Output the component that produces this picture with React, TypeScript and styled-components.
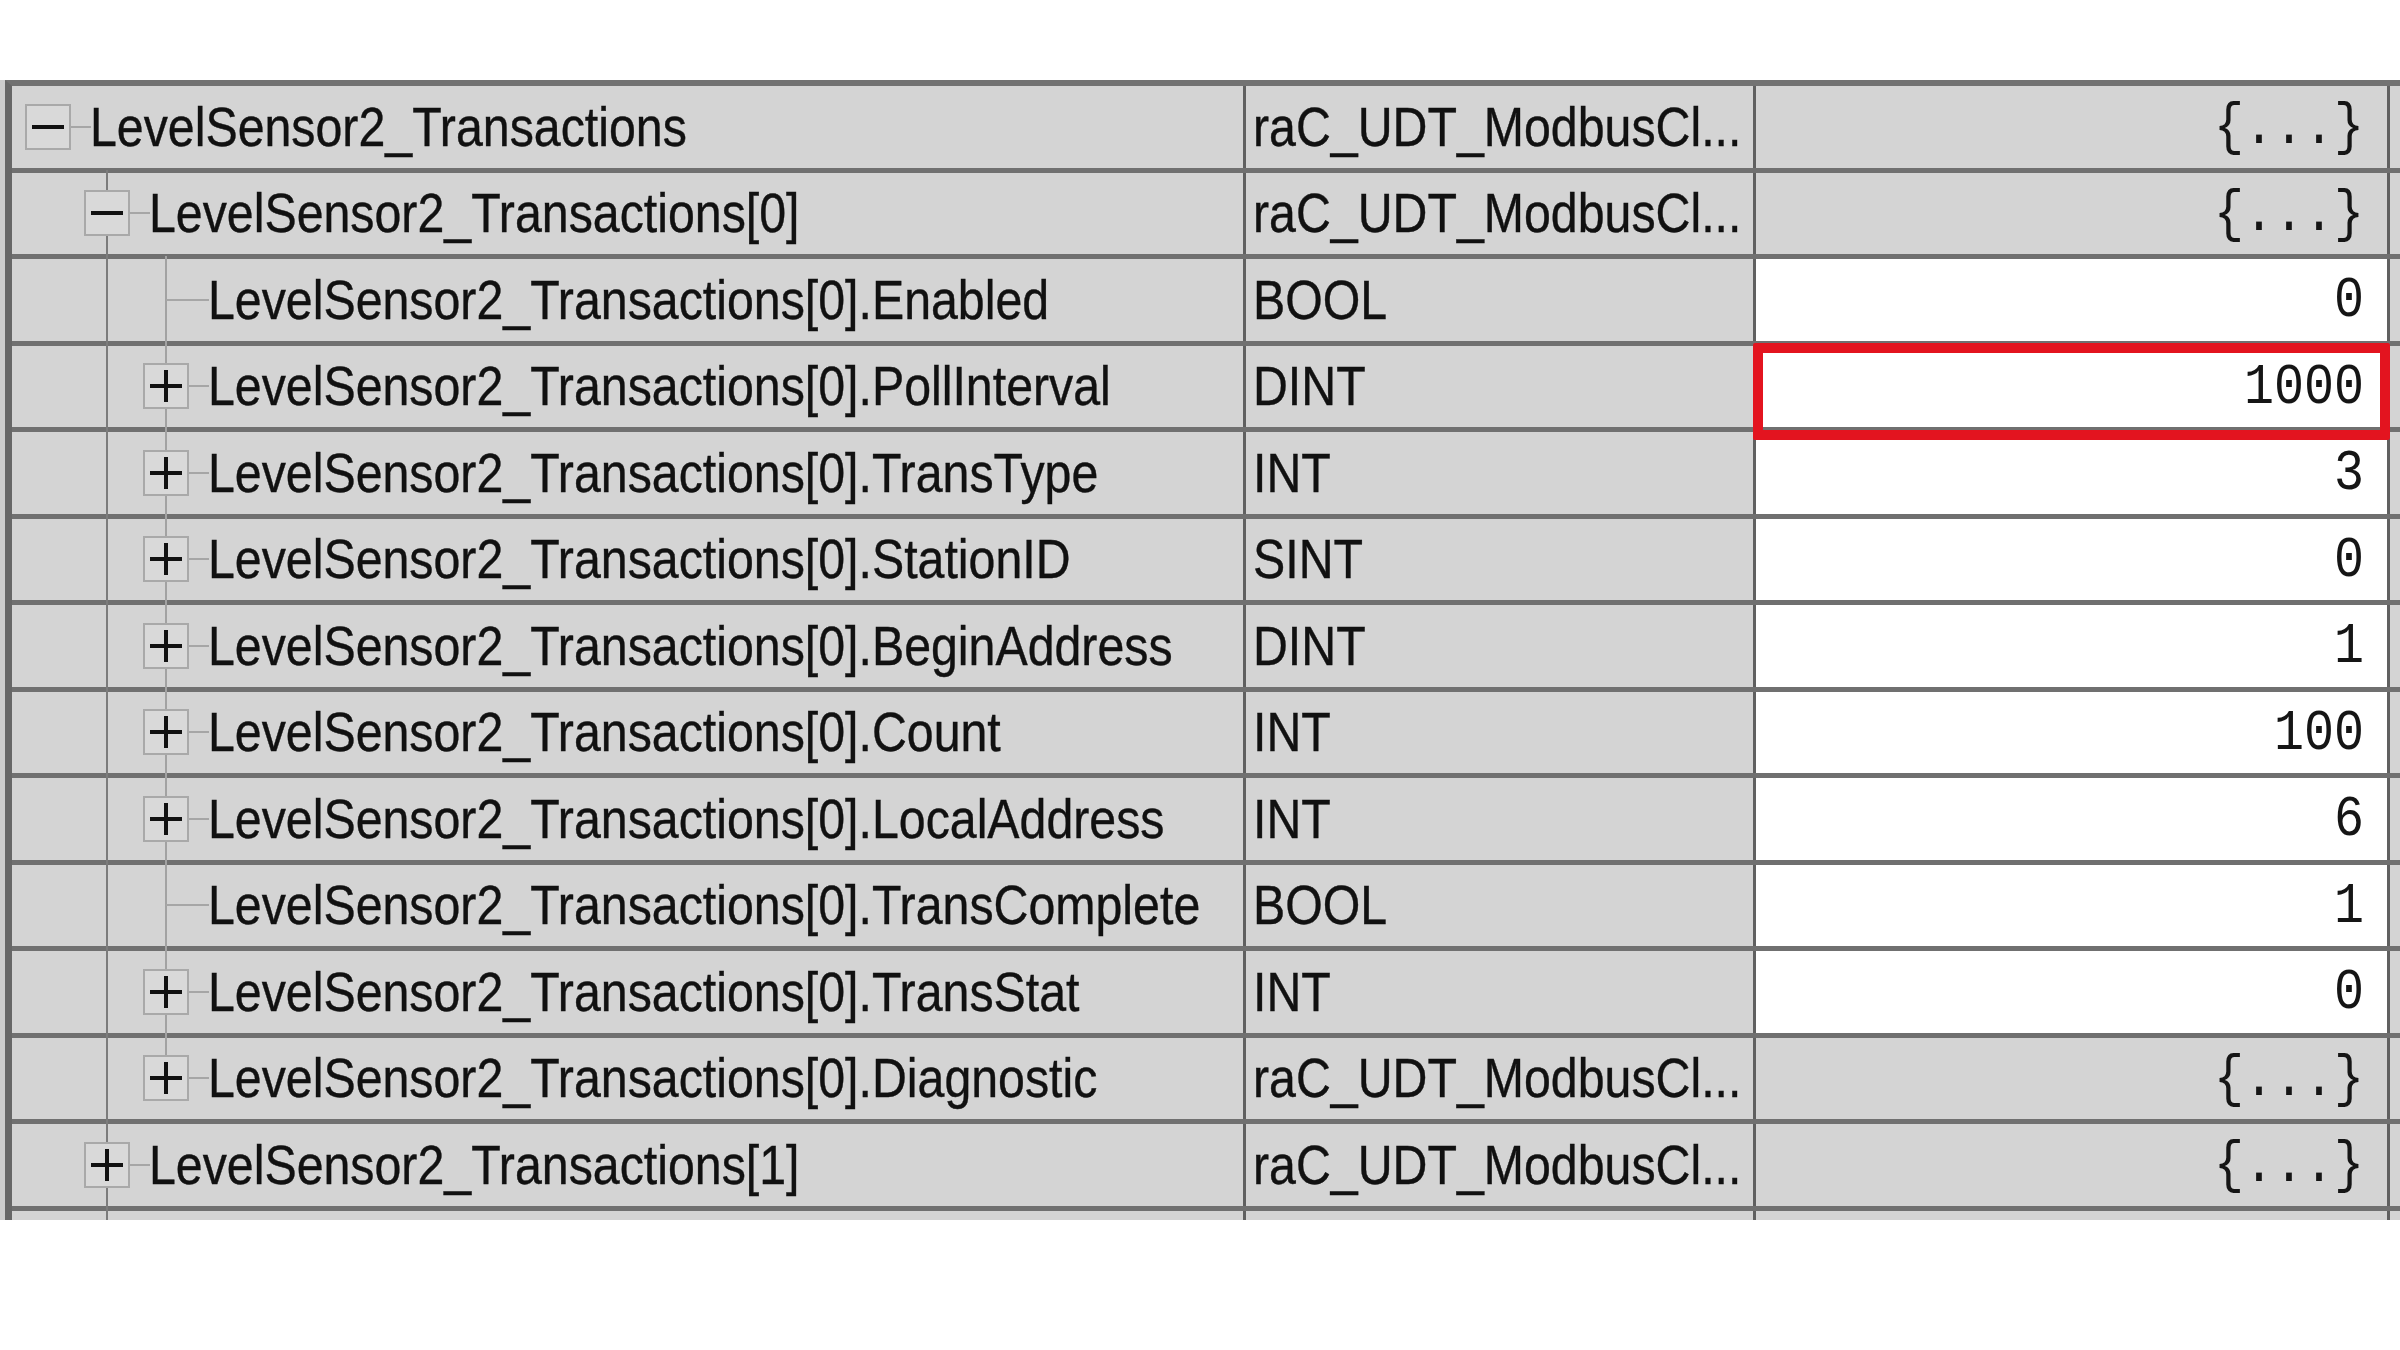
import React from "react";
import styled, { createGlobalStyle } from "styled-components";

const GlobalStyle = createGlobalStyle`
  html, body {
    margin: 0;
    padding: 0;
    background: #ffffff;
  }
  body {
    width: 2400px;
    height: 1350px;
    overflow: hidden;
  }
`;

type SlotSpec =
  | { kind: "empty" }
  | { kind: "pipe" }
  | { kind: "node"; up: boolean; down: boolean; box?: "+" | "-" };

interface TagRow {
  name: string;
  type: string;
  value: string;
  editable: boolean;
  highlight?: boolean;
  slots: SlotSpec[];
}

const E: SlotSpec = { kind: "empty" };
const P: SlotSpec = { kind: "pipe" };
const child = (box?: "+" | "-", down = true): SlotSpec => ({
  kind: "node",
  up: true,
  down,
  box,
});

const base = "LevelSensor2_Transactions";
const udt = "raC_UDT_ModbusCl...";

const rows: TagRow[] = [
  { name: base, type: udt, value: "{...}", editable: false, slots: [{ kind: "node", up: false, down: false, box: "-" }] },
  { name: `${base}[0]`, type: udt, value: "{...}", editable: false, slots: [E, child("-")] },
  { name: `${base}[0].Enabled`, type: "BOOL", value: "0", editable: true, slots: [E, P, child()] },
  { name: `${base}[0].PollInterval`, type: "DINT", value: "1000", editable: true, highlight: true, slots: [E, P, child("+")] },
  { name: `${base}[0].TransType`, type: "INT", value: "3", editable: true, slots: [E, P, child("+")] },
  { name: `${base}[0].StationID`, type: "SINT", value: "0", editable: true, slots: [E, P, child("+")] },
  { name: `${base}[0].BeginAddress`, type: "DINT", value: "1", editable: true, slots: [E, P, child("+")] },
  { name: `${base}[0].Count`, type: "INT", value: "100", editable: true, slots: [E, P, child("+")] },
  { name: `${base}[0].LocalAddress`, type: "INT", value: "6", editable: true, slots: [E, P, child("+")] },
  { name: `${base}[0].TransComplete`, type: "BOOL", value: "1", editable: true, slots: [E, P, child()] },
  { name: `${base}[0].TransStat`, type: "INT", value: "0", editable: true, slots: [E, P, child("+")] },
  { name: `${base}[0].Diagnostic`, type: udt, value: "{...}", editable: false, slots: [E, P, child("+", false)] },
  { name: `${base}[1]`, type: udt, value: "{...}", editable: false, slots: [E, child("+")] },
  { name: "", type: "", value: "", editable: false, slots: [E, P] },
];

const lineTones = ["#8a8a8a", "#7c7c7c", "#a2a2a2"];

const Page = styled.div`
  padding-top: 80px;
  width: 2400px;
`;

const Table = styled.div`
  height: 1140px;
  overflow: hidden;
  background: #cdcdcd;
  padding-left: 5px;
  box-sizing: border-box;
`;

const Grid = styled.div`
  border-left: 7px solid #676767;
  border-top: 6px solid #727272;
  background: #d4d4d4;
  min-height: 100%;
`;

const Row = styled.div`
  display: flex;
  height: 86.5px;
  box-sizing: border-box;
  border-bottom: 5px solid #707070;
`;

const NameCell = styled.div`
  flex: none;
  width: 1234px;
  box-sizing: border-box;
  display: flex;
  align-items: stretch;
  padding-left: 6px;
  border-right: 3px solid #606060;
`;

const Slot = styled.div`
  position: relative;
  flex: none;
  width: 59px;
`;

const VLine = styled.span<{ $top: boolean; $bottom: boolean; $tone: string }>`
  position: absolute;
  left: calc(50% - 1px);
  width: 2px;
  top: ${(p) => (p.$top ? "-3px" : "50%")};
  bottom: ${(p) => (p.$bottom ? "-5px" : "50%")};
  background: ${(p) => p.$tone};
`;

const Stub = styled.span`
  position: absolute;
  left: 50%;
  right: -14px;
  top: calc(50% - 1px);
  height: 2px;
  background: #a6a6a6;
`;

const Expander = styled.span`
  position: absolute;
  left: calc(50% - 23px);
  top: calc(50% - 23px);
  width: 46px;
  height: 46px;
  box-sizing: border-box;
  border: 2px solid #a9a9a9;
  background: #d9d9d9;
  display: flex;
  align-items: center;
  justify-content: center;
`;

/* The grid's font is tall and narrow: a 55px sans, condensed horizontally. */
const CondensedText = styled.span`
  display: inline-block;
  flex: none;
  font-family: "Liberation Sans", Arial, sans-serif;
  font-size: 55px;
  line-height: 64px;
  color: #111111;
  white-space: nowrap;
  -webkit-text-stroke: 0.4px #111111;
  transform: scaleX(0.878);
  transform-origin: 0 50%;
`;

const NameText = styled(CondensedText)`
  align-self: center;
  margin-left: 13px;
`;

const TypeCell = styled.div`
  flex: none;
  width: 510px;
  box-sizing: border-box;
  display: flex;
  align-items: center;
  padding-left: 7px;
  border-right: 3px solid #606060;
`;

const ValueCell = styled.div<{ $editable: boolean }>`
  position: relative;
  flex: none;
  width: 634px;
  box-sizing: border-box;
  display: flex;
  align-items: center;
  justify-content: flex-end;
  padding-right: 23px;
  padding-top: 3px;
  border-right: 3px solid #606060;
  background: ${(p) => (p.$editable ? "#ffffff" : "#d4d4d4")};
`;

const ValueText = styled.span`
  display: inline-block;
  font-family: "Liberation Mono", "Courier New", monospace;
  font-size: 50px;
  line-height: 60px;
  color: #151515;
  white-space: nowrap;
  transform: scaleY(1.14);
`;

const Highlight = styled.div`
  position: absolute;
  left: -3px;
  right: -3px;
  top: -3px;
  bottom: -13px;
  border: 10px solid #e3141f;
  border-radius: 2px;
  z-index: 2;
  pointer-events: none;
`;

const Filler = styled.div`
  flex: 1;
  background: #d4d4d4;
`;

const Sign: React.FC<{ plus: boolean }> = ({ plus }) => (
  <svg width="42" height="42" viewBox="0 0 42 42">
    <line x1="5" y1="21" x2="37" y2="21" stroke="#111" strokeWidth="4" />
    {plus && <line x1="21" y1="5" x2="21" y2="37" stroke="#111" strokeWidth="4" />}
  </svg>
);

const TreeSlot: React.FC<{ spec: SlotSpec; index: number; hasText: boolean }> = ({ spec, index, hasText }) => {
  const tone = lineTones[index] ?? "#a2a2a2";
  if (spec.kind === "empty") return <Slot />;
  if (spec.kind === "pipe")
    return (
      <Slot>
        <VLine $top $bottom $tone={tone} />
      </Slot>
    );
  return (
    <Slot>
      {spec.up && <VLine $top $bottom={false} $tone={tone} />}
      {spec.down && <VLine $top={false} $bottom $tone={tone} />}
      {hasText && <Stub />}
      {spec.box && (
        <Expander>
          <Sign plus={spec.box === "+"} />
        </Expander>
      )}
    </Slot>
  );
};

export default function App() {
  return (
    <>
      <GlobalStyle />
      <Page>
        <Table>
          <Grid>
            {rows.map((r, i) => (
              <Row key={i}>
                <NameCell>
                  {r.slots.map((s, j) => (
                    <TreeSlot key={j} spec={s} index={j} hasText={r.name !== ""} />
                  ))}
                  {r.name && <NameText>{r.name}</NameText>}
                </NameCell>
                <TypeCell>{r.type && <CondensedText>{r.type}</CondensedText>}</TypeCell>
                <ValueCell $editable={r.editable}>
                  {r.value && <ValueText>{r.value}</ValueText>}
                  {r.highlight && <Highlight />}
                </ValueCell>
                <Filler />
              </Row>
            ))}
          </Grid>
        </Table>
      </Page>
    </>
  );
}
